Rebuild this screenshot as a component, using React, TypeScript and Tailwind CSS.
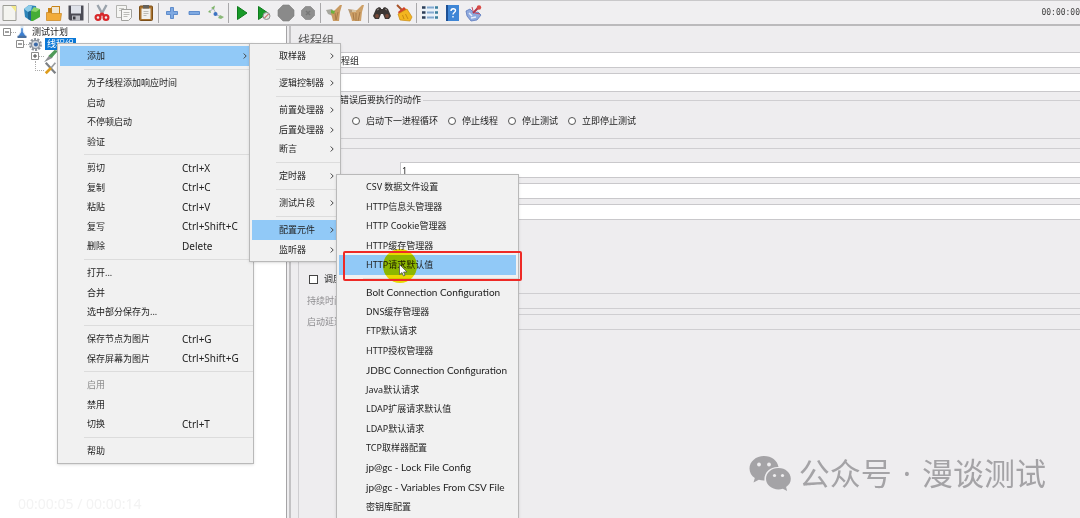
import { Fragment, type ReactNode } from 'react';
import clsx from 'clsx';

interface MenuEntry {
  label: string;
  shortcut?: string;
  submenu?: boolean;
  active?: boolean;
  disabled?: boolean;
  latin?: boolean;
}

const threadGroupMenu: MenuEntry[][] = [
  [{ label: '添加', submenu: true, active: true }],
  [{ label: '为子线程添加响应时间' }, { label: '启动' }, { label: '不停顿启动' }, { label: '验证' }],
  [
    { label: '剪切', shortcut: 'Ctrl+X' },
    { label: '复制', shortcut: 'Ctrl+C' },
    { label: '粘贴', shortcut: 'Ctrl+V' },
    { label: '复写', shortcut: 'Ctrl+Shift+C' },
    { label: '删除', shortcut: 'Delete' },
  ],
  [{ label: '打开...' }, { label: '合并' }, { label: '选中部分保存为...' }],
  [
    { label: '保存节点为图片', shortcut: 'Ctrl+G' },
    { label: '保存屏幕为图片', shortcut: 'Ctrl+Shift+G' },
  ],
  [{ label: '启用', disabled: true }, { label: '禁用' }, { label: '切换', shortcut: 'Ctrl+T' }],
  [{ label: '帮助' }],
];

const addMenu: MenuEntry[][] = [
  [{ label: '取样器', submenu: true }],
  [{ label: '逻辑控制器', submenu: true }],
  [
    { label: '前置处理器', submenu: true },
    { label: '后置处理器', submenu: true },
    { label: '断言', submenu: true },
  ],
  [{ label: '定时器', submenu: true }],
  [{ label: '测试片段', submenu: true }],
  [
    { label: '配置元件', submenu: true, active: true },
    { label: '监听器', submenu: true },
  ],
];

const configMenu: MenuEntry[][] = [
  [
    { label: 'CSV 数据文件设置' },
    { label: 'HTTP信息头管理器' },
    { label: 'HTTP Cookie管理器' },
    { label: 'HTTP缓存管理器' },
    { label: 'HTTP请求默认值', active: true },
  ],
  [
    { label: 'Bolt Connection Configuration', latin: true },
    { label: 'DNS缓存管理器' },
    { label: 'FTP默认请求' },
    { label: 'HTTP授权管理器' },
    { label: 'JDBC Connection Configuration', latin: true },
    { label: 'Java默认请求' },
    { label: 'LDAP扩展请求默认值' },
    { label: 'LDAP默认请求' },
    { label: 'TCP取样器配置' },
    { label: 'jp@gc - Lock File Config', latin: true },
    { label: 'jp@gc - Variables From CSV File', latin: true },
    { label: '密钥库配置' },
  ],
];

function Icon({ children, className = 'h-4 w-4' }: { children: ReactNode; className?: string }) {
  return (
    <svg viewBox="0 0 16 16" className={clsx('shrink-0 overflow-visible', className)} fill="none" aria-hidden="true">
      {children}
    </svg>
  );
}

const toolbarGroups: { label: string; icon: ReactNode }[][] = [
  [
    {
      label: '新建',
      icon: (
        <>
          <path d="M1 .500h13v15H1z" fill="#f4f4f0" stroke="#9c9c96" />
          <path d="M9 1h5v6z" fill="#f3e98a" />
        </>
      ),
    },
    {
      label: '模板',
      icon: (
        <>
          <path d="M0 4l5-4 7 1 1 10-6 5-6-4z" fill="#2c83b8" />
          <path d="M0 4l5-4 3 1-1 5-3 1z" fill="#8ccbe8" />
          <path d="M4 7l4-2v11l-4-2z" fill="#1d6795" />
          <path d="M7 6l9-2v8l-7 4H7z" fill="#45ad36" />
          <path d="M7 6l3-4 6 2-4 3z" fill="#8ad46b" />
        </>
      ),
    },
    {
      label: '打开',
      icon: (
        <>
          <path d="M2 8V3h3l1-2h8v8z" fill="#c98318" />
          <path d="M6 2h7v8H6z" fill="#f0e6d2" />
          <path d="M.5 7.500h4l1 1h10l-1 7H.500z" fill="#f2ac3a" stroke="#c7821c" strokeWidth=".7" />
        </>
      ),
    },
    {
      label: '保存',
      icon: (
        <>
          <path d="M.5.500h15v15H2l-1.500-1.500z" fill="#4b4b55" />
          <path d="M3 .500h10v8H3z" fill="#dfe2ea" />
          <path d="M4 10.500h8v5H4z" fill="#b9bbc2" />
          <path d="M5 11.500h2.500v3H5z" fill="#3a3a42" />
        </>
      ),
    },
  ],
  [
    {
      label: '剪切',
      icon: (
        <>
          <path d="M3.500 0l5.500 10M12.500 0L7 10" stroke="#9ba3ac" strokeWidth="2.400" />
          <path d="M8 8l-2 3M8 8l2 3" stroke="#d8272a" strokeWidth="2.400" />
          <circle cx="4" cy="12.500" r="2.400" stroke="#d8272a" strokeWidth="2.200" />
          <circle cx="12" cy="12.500" r="2.400" stroke="#d8272a" strokeWidth="2.200" />
        </>
      ),
    },
    {
      label: '复制',
      icon: (
        <>
          <path d="M.5.500h10v12h-10z" fill="#f5f5f3" stroke="#b3b3b0" />
          <path d="M3 3.500h5M3 5.500h5" stroke="#c4c4c0" />
          <path d="M5.500 4.500h10v8l-3 3h-7z" fill="#f7f7f5" stroke="#a0a09d" />
          <path d="M7.500 7.500h6M7.500 9.500h6M7.500 11.500h4" stroke="#bcbcb8" />
        </>
      ),
    },
    {
      label: '粘贴',
      icon: (
        <>
          <rect x="1.500" y="1" width="13" height="14.500" rx="1" fill="#a8712c" stroke="#7c4f18" />
          <path d="M3.500 3.500h9v10.500h-9z" fill="#f1f0ec" />
          <path d="M5 0h6v3.500H5z" fill="#63615c" />
          <path d="M5.500 6.500h5M5.500 8.500h5M5.500 10.500h3" stroke="#bdbbb4" />
        </>
      ),
    },
  ],
  [
    {
      label: '展开全部',
      icon: <path d="M6.500 2.500h3v4H13.500v3h-4v4h-3v-4H2.500v-3h4z" fill="#7fa9e2" stroke="#4a7cc4" strokeWidth=".8" />,
    },
    { label: '折叠全部', icon: <path d="M3 6.500h10.500v3H3z" fill="#7fa9e2" stroke="#4a7cc4" strokeWidth=".8" /> },
    {
      label: '切换',
      icon: (
        <>
          <path d="M1 7l5-4M5 3l4 7M9 10l4 2" stroke="#a9b4c0" />
          <path d="M3 3l4-2.500-1 4zM2 5L0 7l3 1z" fill="#7db368" />
          <circle cx="7.500" cy="9" r="2" fill="#3c72c2" />
          <path d="M12 10l4 2-3 2-3-1z" fill="#8bb879" />
        </>
      ),
    },
  ],
  [
    { label: '启动', icon: <path d="M3.500 1.500L13 8l-9.500 6.500z" fill="#179a28" stroke="#0f7a1d" /> },
    {
      label: '不停顿启动',
      icon: (
        <>
          <path d="M2.500 1.500L12 8l-9.500 6.500z" fill="#179a28" stroke="#0f7a1d" />
          <circle cx="10.500" cy="11" r="3.500" fill="#dfe6e0" stroke="#8d8d8d" />
          <path d="M8.500 13l4-4" stroke="#c33" />
        </>
      ),
    },
    {
      label: '停止',
      icon: <path d="M5 0h6l5 5v6l-5 5H5l-5-5V5z" fill="#8a8a8a" stroke="#7c7c7c" strokeWidth=".6" />,
    },
    {
      label: '关闭',
      icon: (
        <>
          <path d="M5.500 1.500h5l4 4v5l-4 4h-5l-4-4v-5z" fill="#8f8f8f" stroke="#7c7c7c" strokeWidth=".6" />
          <path d="M6 6l4 4M10 6l-4 4" stroke="#777" strokeWidth="1.500" />
        </>
      ),
    },
  ],
  [
    {
      label: '清除',
      icon: (
        <>
          <path d="M0 5l6-1 2 3-1 4-5-2z" fill="#a7a79f" />
          <path d="M5 8l4-3 5-5h2l-2 7-1 9H7z" fill="#c99a62" />
          <path d="M9 8l1 7M12 7l-2 8" stroke="#a87a48" />
          <path d="M5 5l4 1-1 3-3-1z" fill="#6db03c" />
        </>
      ),
    },
    {
      label: '清除全部',
      icon: (
        <>
          <path d="M0 4l7 1 2 4-6 3z" fill="#b59a78" />
          <path d="M2 8l7-3 5-5h2l-2 7-1 9H4z" fill="#cda067" />
          <path d="M8 8v8M12 7l-2 9M5 8l1 7" stroke="#a87a48" />
          <path d="M4 5h4v2H4z" fill="#d9c5a3" />
        </>
      ),
    },
  ],
  [
    {
      label: '查找',
      icon: (
        <>
          <path d="M2 4l3-2 2 1v1h2V3l2-1 3 2 3 7-2 3h-4L9 9H7l-2 5H1l-2-3z" fill="#3b3634" />
          <circle cx="3" cy="11" r="1.900" fill="#7a4b3a" />
          <circle cx="13" cy="11" r="1.900" fill="#7a4b3a" />
          <path d="M3 5l2-1M11 4l2 1" stroke="#8a8580" />
        </>
      ),
    },
    {
      label: '重置查找',
      icon: (
        <>
          <path d="M1 0l6 6" stroke="#a8522a" strokeWidth="2" />
          <path d="M8 2l4 4-8 5-2-4z" fill="#d3432b" />
          <path d="M2 9l9-5 5 8-2 4-10-1z" fill="#f3b51f" stroke="#c98a12" strokeWidth=".7" />
          <path d="M8 14L6.500 10M12 14L9.500 9" stroke="#c98a12" />
        </>
      ),
    },
  ],
  [
    {
      label: '函数助手',
      icon: (
        <>
          <path d="M0 1h16v14H0z" fill="#e9f1f8" />
          <path d="M0 2.500h3.500M0 7.500h3.500M0 12.500h3.500" stroke="#2c3e57" strokeWidth="2.600" />
          <path d="M5 2.500h7M5 7.500h7M5 12.500h7" stroke="#84a9cf" strokeWidth="2" />
          <path d="M13 2.500h3M13 7.500h3M13 12.500h3" stroke="#3b7f9c" strokeWidth="2.400" />
        </>
      ),
    },
    {
      label: '帮助',
      icon: (
        <>
          <path d="M2 0h13v16H2z" fill="#3f86d6" />
          <path d="M2 0h2v16H2z" fill="#1c4f94" />
          <path d="M7 6c0-3 4.500-3 4.500-.5C11.500 7.500 9 7.500 9 9.500M9 11v1.500" stroke="#fff" strokeWidth="1.400" />
        </>
      ),
    },
    {
      label: '插件',
      icon: (
        <>
          <path d="M0 6l4-2 4 4 4-1 3 3-4 5-6 1-4-5z" fill="#8fa9de" stroke="#5a79bd" strokeWidth=".8" />
          <path d="M7 8l6-6" stroke="#b33348" strokeWidth="2" />
          <circle cx="13" cy="2.500" r="2.200" fill="#d84a45" />
          <path d="M9 8l5 1M6 2l1 4" stroke="#c74a65" />
          <path d="M3 8l3 3M5 13l5-1" stroke="#e6ecfa" strokeWidth="1.500" />
        </>
      ),
    },
  ],
];

function Toolbar() {
  return (
    <header className="flex h-[26px] shrink-0 items-center border-t border-b-2 border-t-[#c9c8ca] border-b-[#bbbabc] bg-[#f0eff1]">
      <div className="-ml-px flex items-center">
        {toolbarGroups.map((group, i) => (
          <Fragment key={group[0].label}>
            {i > 0 && <span className="mr-0.5 ml-px h-5 w-px bg-[#a9a8aa]" />}
            {group.map(({ label, icon }) => (
              <button key={label} type="button" aria-label={label} className="flex w-[22px] justify-center">
                <Icon>{icon}</Icon>
              </button>
            ))}
          </Fragment>
        ))}
      </div>
      <span className="ml-auto shrink-0 font-['DejaVu_Sans_Mono',monospace] text-[8px] text-[#444]">00:00:00</span>
    </header>
  );
}

function Toggle({ open }: { open: boolean }) {
  return (
    <svg viewBox="0 0 8 8" className="h-2 w-2 shrink-0" fill="#fff" stroke="#8c8c8c" aria-hidden="true">
      <path d="M.5.500h7v7h-7z" />
      <path d={open ? 'M2 4h4' : 'M2 4h4M4 2v4'} stroke="#444" />
    </svg>
  );
}

function TestTree() {
  return (
    <aside className="w-[287px] shrink-0 overflow-hidden border-r border-[#a5a4a6] bg-white leading-3">
      <ul>
        <li className="flex h-3 items-center pl-[3px]">
          <Toggle open />
          <span className="w-[5px] border-t border-dotted border-[#aaa]" />
          <Icon className="mr-1 h-3 w-3">
            <path d="M6 0h4v6l4 8-1 2H3l-1-2 4-8z" fill="#dce9f6" />
            <path d="M7 3h2v5l4 6H3l4-6z" fill="#3c7fd0" />
            <path d="M2 13h12v3H2z" fill="#4a6f9e" />
          </Icon>
          测试计划
        </li>
        <li className="flex h-3 items-center pl-4">
          <Toggle open />
          <span className="w-[5px] border-t border-dotted border-[#aaa]" />
          <Icon className="mr-[3px] h-[13px] w-[13px]">
            <circle cx="8" cy="8" r="6.500" stroke="#8b929b" strokeWidth="3" strokeDasharray="2.500 1.500" />
            <circle cx="8" cy="8" r="5" fill="#d5dae1" stroke="#8a929c" strokeWidth="1.500" />
            <circle cx="8.500" cy="8" r="2.500" fill="#3a6aa8" />
          </Icon>
          <span className="bg-[#0a78d7] px-0.5 text-white">线程组</span>
        </li>
        <li className="flex h-3 items-center pl-[31px]">
          <Toggle open={false} />
          <span className="w-[5px] border-t border-dotted border-[#aaa]" />
          <Icon className="h-[14px] w-[14px]">
            <path d="M0 15l6-8 4 3z" fill="#8d8f92" />
            <path d="M5 8l7-7 4 1-7 8z" fill="#4f9a58" />
          </Icon>
        </li>
        <li className="flex h-3 items-center pl-[35px]">
          <span className="mb-1 h-2.5 w-[9px] border-b border-l border-dotted border-[#aaa]" />
          <Icon className="h-[14px] w-[14px]">
            <path d="M2 2l11 12" stroke="#7c8084" strokeWidth="2.500" />
            <path d="M13 2L8 8" stroke="#9a9da0" strokeWidth="2" />
            <path d="M8 8l-6 6" stroke="#dd9c1b" strokeWidth="3" />
          </Icon>
        </li>
      </ul>
    </aside>
  );
}

const fieldClass = 'h-4 min-w-0 flex-1 border border-[#c9c8cb] border-r-0 bg-white px-px';

function ThreadGroupForm() {
  return (
    <main className="ml-0.5 flex min-w-0 flex-1 flex-col overflow-hidden border-l-2 border-[#c3c2c4] bg-[#eeedef] pl-[7px] leading-3">
      <h1 className="h-[26px] pt-[7px] text-[12px] leading-4 text-[#555]">线程组</h1>

      <div className="flex pl-8">
        <input aria-label="名称" defaultValue="线程组" className={fieldClass} />
      </div>
      <div className="mt-[5px] flex pl-8">
        <input
          aria-label="注释"
          className="h-[19px] min-w-0 flex-1 border border-r-0 border-[#c9c8cb] bg-white px-px"
        />
      </div>

      <fieldset className="mt-0.5 h-[45px] border border-r-0 border-[#cfced1] pl-[53px]">
        <legend className="-ml-12 pr-0.5">在取样器错误后要执行的动作</legend>
        <div className="flex gap-2.5 pt-[9px]">
          {['启动下一进程循环', '停止线程', '停止测试', '立即停止测试'].map((action) => (
            <label key={action} className="flex items-center gap-1.5">
              <input
                type="radio"
                name="on-error"
                className="h-2 w-2 appearance-none rounded-full border border-[#555] bg-white"
              />
              {action}
            </label>
          ))}
        </div>
      </fieldset>

      <fieldset className="mt-[3px] flex-1 border border-r-0 border-b-0 border-[#cfced1] pl-2">
        <legend className="-ml-1">线程属性</legend>
        <div className="mt-2 flex flex-col gap-[5px]">
          <div className="flex items-center">
            <label htmlFor="threads" className="w-[93px]">线程数</label>
            <input id="threads" defaultValue="1" className={fieldClass} />
          </div>
          <div className="flex pl-[93px]">
            <input aria-label="Ramp-Up时间" className={fieldClass} />
          </div>
          <div className="flex pl-[93px]">
            <input aria-label="循环次数" className={fieldClass} />
          </div>
        </div>

        <label className="mt-[53px] flex items-center gap-1.5 pl-0.5">
          <input type="checkbox" className="h-[9px] w-[9px] appearance-none border border-[#444] bg-white" />
          调度器
        </label>
        <div className="mt-2 flex flex-col gap-[5px] text-[#8e8d90]">
          <div className="flex items-center">
            <label htmlFor="duration" className="w-[93px]">持续时间</label>
            <input id="duration" disabled className="h-4 min-w-0 flex-1 border border-r-0 border-[#cfced1]" />
          </div>
          <div className="flex items-center">
            <label htmlFor="delay" className="w-[93px]">启动延迟</label>
            <input id="delay" disabled className="h-4 min-w-0 flex-1 border border-r-0 border-[#cfced1]" />
          </div>
        </div>
      </fieldset>
    </main>
  );
}

function Menu({ groups, className }: { groups: MenuEntry[][]; className: string }) {
  return (
    <div role="menu" className={clsx('absolute border border-[#b9b9b9] bg-[#f1f1f1] py-0.5 shadow-sm', className)}>
      {groups.map((group, i) => (
        <Fragment key={group[0].label}>
          {i > 0 && <div role="separator" className="my-[3px] ml-[26px] h-px bg-[#dcdcdc]" />}
          <div>
            {group.map((entry) => (
              <button
                key={entry.label}
                type="button"
                role="menuitem"
                disabled={entry.disabled}
                className={clsx(
                  'mx-0.5 flex h-[19px] w-[calc(100%-4px)] items-center pr-1 pl-[27px] text-left odd:h-5',
                  entry.active && 'bg-[#91c9f7]',
                  entry.disabled && 'text-[#8d8d8d]',
                )}
              >
                <span
                  className={clsx(
                    'whitespace-nowrap',
                    entry.shortcut && 'w-[95px]',
                    entry.latin && "font-['Lato',sans-serif] text-[10px]",
                  )}
                >
                  {entry.label}
                </span>
                {entry.shortcut && <span className="text-[10px]">{entry.shortcut}</span>}
                {entry.submenu && (
                  <svg viewBox="0 0 4 6" className="ml-auto h-1.5 w-1" fill="none" stroke="#444" aria-hidden="true">
                    <path d="M.7.500L3.200 3 .7 5.500" />
                  </svg>
                )}
              </button>
            ))}
          </div>
        </Fragment>
      ))}
    </div>
  );
}

function ClickHighlight() {
  return (
    <>
      <div className="absolute top-[249px] left-[383px] h-[34px] w-[34px] rounded-full bg-[#f7e800] mix-blend-multiply" />
      <div className="absolute top-[251px] left-[343px] h-[30px] w-[179px] rounded-xs border-2 border-[#ee2a26]" />
      <svg viewBox="0 0 9 13" className="absolute top-[264px] left-[399px] h-[13px] w-[9px]" aria-hidden="true">
        <path d="M.5.500v10l2.500-2 1.500 3.500 1.500-.7L4.600 8H8z" fill="#fff" stroke="#555" strokeWidth=".8" />
      </svg>
    </>
  );
}

function Watermark() {
  return (
    <div className="absolute right-[34px] bottom-[27px] flex items-center gap-2 text-[#a4a3a6]">
      <svg viewBox="0 0 42 36" className="h-9 w-[42px]" fill="currentColor" aria-hidden="true">
        <path d="M15 1C7 1 .5 6.500.5 13.500c0 4 2 7.300 5.300 9.500L4.500 27.500l5.300-2.700c1.700.5 3.500.8 5.700.8C14.500 18 21 11.500 29.500 12 28.500 5.500 22.500 1 15 1z" />
        <path d="M29.500 13C22.500 13 17 17.800 17 23.700s5.500 10.700 12.500 10.700c1.500 0 3-.2 4.300-.6l4.300 2.200-1-4c3-2 4.700-5 4.700-8.300C41.800 17.800 36.500 13 29.500 13z" />
        <g fill="#eeedef">
          <circle cx="10" cy="9.500" r="1.900" />
          <circle cx="20" cy="9.500" r="1.900" />
          <circle cx="25.500" cy="20.500" r="1.600" />
          <circle cx="33.500" cy="20.500" r="1.600" />
        </g>
      </svg>
      <p className="flex gap-[11px] text-[31px] leading-9">
        <span>公众号</span>
        <span>·</span>
        <span>漫谈测试</span>
      </p>
    </div>
  );
}

export default function App() {
  return (
    <div className="relative flex h-screen flex-col overflow-hidden bg-[#eeedef] font-['Noto_Sans','Noto_Sans_CJK_SC',sans-serif] text-[9px] text-[#222]">
      <Toolbar />
      <div className="flex min-h-0 flex-1">
        <TestTree />
        <ThreadGroupForm />
      </div>

      <span className="absolute bottom-1.5 left-[18px] text-[14px] leading-4 text-[#f3f3f3]">00:00:05 / 00:00:14</span>

      <Menu groups={threadGroupMenu} className="top-[43px] left-[57px] w-[197px]" />
      <Menu groups={addMenu} className="top-[43px] left-[249px] w-[92px]" />
      <Menu groups={configMenu} className="top-[174px] left-[336px] w-[183px]" />
      <ClickHighlight />
      <Watermark />
    </div>
  );
}
